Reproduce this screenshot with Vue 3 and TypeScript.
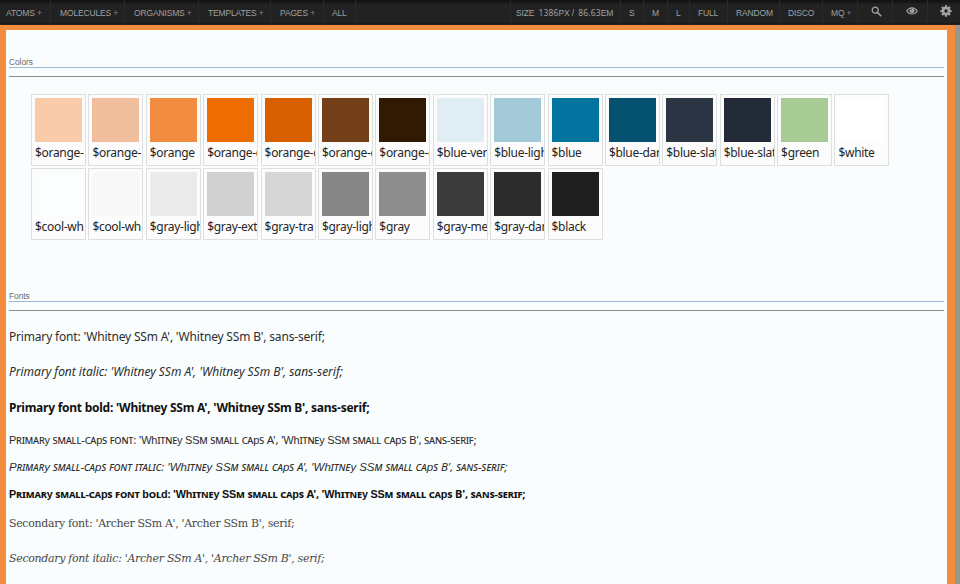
<script setup lang="ts">
interface Swatch { name: string; color: string }
interface Sample { text: string; kind: string; caps?: boolean }

const menus: string[] = ['Atoms', 'Molecules', 'Organisms', 'Templates', 'Pages']
const tools: string[] = ['S', 'M', 'L', 'Full', 'Random', 'Disco']

const swatches: Swatch[] = [
  { name: '$orange-', color: '#f9cbab' },
  { name: '$orange-', color: '#f0be9c' },
  { name: '$orange', color: '#f28c41' },
  { name: '$orange-dark', color: '#ef6c00' },
  { name: '$orange-darker', color: '#d96000' },
  { name: '$orange-deep', color: '#733f18' },
  { name: '$orange-extra-dark', color: '#301b02' },
  { name: '$blue-very-light', color: '#e0edf3' },
  { name: '$blue-light', color: '#a3c9d9' },
  { name: '$blue', color: '#03749f' },
  { name: '$blue-dark', color: '#04526f' },
  { name: '$blue-slate', color: '#2b3544' },
  { name: '$blue-slate-dark', color: '#222b37' },
  { name: '$green', color: '#a8cb96' },
  { name: '$white', color: '#ffffff' },
  { name: '$cool-wh', color: '#fbfefe' },
  { name: '$cool-wh', color: '#f8f8f8' },
  { name: '$gray-light', color: '#ebebeb' },
  { name: '$gray-extra-light', color: '#d1d1d1' },
  { name: '$gray-tra', color: '#d6d6d6' },
  { name: '$gray-light-medium', color: '#868686' },
  { name: '$gray', color: '#8e8e8e' },
  { name: '$gray-me', color: '#3b3b3b' },
  { name: '$gray-dark', color: '#2c2c2c' },
  { name: '$black', color: '#1e1e1e' },
]

const samples: Sample[] = [
  { text: "Primary font: 'Whitney SSm A', 'Whitney SSm B', sans-serif;", kind: 'regular' },
  { text: "Primary font italic: 'Whitney SSm A', 'Whitney SSm B', sans-serif;", kind: 'italic' },
  { text: "Primary font bold: 'Whitney SSm A', 'Whitney SSm B', sans-serif;", kind: 'bold' },
  { text: "Primary small-caps font: 'Whitney SSm small caps A', 'Whitney SSm small caps B', sans-serif;", kind: 'caps', caps: true },
  { text: "Primary small-caps font italic: 'Whitney SSm small caps A', 'Whitney SSm small caps B', sans-serif;", kind: 'caps-italic', caps: true },
  { text: "Primary small-caps font bold: 'Whitney SSm small caps A', 'Whitney SSm small caps B', sans-serif;", kind: 'caps-bold', caps: true },
  { text: "Secondary font: 'Archer SSm A', 'Archer SSm B', serif;", kind: 'serif' },
  { text: "Secondary font italic: 'Archer SSm A', 'Archer SSm B', serif;", kind: 'serif-italic' },
]

const runs = (text: string): string[] => text.split(/([PSWhypbd]+)/).filter(Boolean)
const isFallback = (run: string): boolean => /^[PSWhypbd]+$/.test(run)
</script>

<template>
  <div class="viewer">
    <header class="bar">
      <nav class="menus">
        <a v-for="m in menus" :key="m">{{ m }} <i>+</i></a>
        <a>All</a>
      </nav>
      <div class="tools">
        <span class="size">Size <b>1386</b>px / <b>86.63</b>em</span>
        <a v-for="t in tools" :key="t">{{ t }}</a>
        <a>MQ <i>+</i></a>
        <a class="icon">
          <svg width="11" height="11" viewBox="0 0 11 11"><circle cx="4.2" cy="4.2" r="3" fill="none" stroke="currentColor" stroke-width="1.3" /><path d="M6.5 6.5 9.8 9.8" stroke="currentColor" stroke-width="1.6" stroke-linecap="round" /></svg>
        </a>
        <a class="icon">
          <svg width="12" height="10" viewBox="0 0 12 10"><path d="M.7 5C3.2.6 8.8.6 11.3 5 8.8 9 3.2 9 .7 5Z" fill="none" stroke="currentColor" stroke-width="1.1" /><circle cx="6" cy="4.4" r="2.5" fill="currentColor" /><path d="M4.8 4.2A1.3 1.3 0 0 1 6 3" stroke="#222" stroke-width=".7" fill="none" /></svg>
        </a>
        <a class="icon">
          <svg width="12" height="12" viewBox="-6 -6 12 12" fill="currentColor"><g v-for="n in 4" :key="n" :transform="`rotate(${n * 45})`"><path d="M-1.3-3.5-1-5.7H1L1.3-3.5V3.5L1 5.7H-1L-1.3 3.5Z" /></g><circle r="4.2" /><circle r="1.7" fill="#222" /></svg>
        </a>
      </div>
    </header>
    <div class="stage">
      <main class="page">
        <section class="colors">
          <h2>Colors</h2>
          <div class="rule"></div>
          <ul class="swatches">
            <li v-for="s in swatches" :key="s.color">
              <div class="chip" :style="{ background: s.color }"></div>
              <span>{{ s.name }}</span>
            </li>
          </ul>
        </section>
        <section class="fonts">
          <h2>Fonts</h2>
          <div class="rule"></div>
          <div class="samples">
            <p v-for="s in samples" :key="s.kind" :class="s.kind"><span v-if="!s.caps">{{ s.text }}</span><span v-else><span v-for="(r, i) in runs(s.text)" :key="i" :class="isFallback(r) ? 'fallback' : 'small'">{{ r }}</span></span></p>
          </div>
        </section>
      </main>
    </div>
  </div>
</template>

<style>
body { margin: 0; overflow: hidden; }
</style>

<style scoped>
* { box-sizing: border-box; }
.viewer { width: 960px; height: 584px; display: flex; flex-direction: column; overflow: hidden; background: #999792; }
.bar { height: 25px; flex: none; display: flex; justify-content: space-between; background: linear-gradient(#121212 0, #151515 2px, #222 4px, #222 22px, #191919 24px, #37281c 25px); color: #a0a0a0; font: 8.5px/26px "Liberation Sans", Arial, sans-serif; letter-spacing: -.15px; text-transform: uppercase; }
.menus, .tools { display: grid; }
.menus { grid-template-columns: 51px 74px 74px 72px 53px 32px; }
.tools { grid-template-columns: 111px 23px 24px 22px 38px 52px 43px 35px 35px 35px 32px; }
.menus a, .tools a, .size { padding-left: 9px; border-right: 1px solid #292929; white-space: nowrap; }
.menus a:first-child { padding-left: 6px; }
.menus a:last-child, .tools a { padding-left: 8px; }
.size { padding-left: 5px; border-left: 1px solid #292929; }
.tools a:last-child { border-right: 0; }
.menus i, .tools i { font-style: normal; color: #858585; }
.size b { font: 8.5px "Noto Sans", sans-serif; letter-spacing: .15px; margin-left: 2px; }
.tools .icon { padding: 0 0 0 3px; height: 22px; display: flex; align-items: center; justify-content: center; }
.icon svg { display: block; }
.stage { flex: 1; width: 955px; background: #f48c3e; padding: 5px 8px 0 6px; min-height: 0; }
.page { height: 100%; background: #fafdfd; padding: 26px 3px 0; overflow: hidden; }
section { display: flex; flex-direction: column; }
.colors { height: 234px; }
h2 { margin: 0; height: 11px; font: 8.3px/12px "Liberation Sans", Arial, sans-serif; color: #666; }
.rule { height: 10px; flex: none; border-top: 1px solid #9dbbd3; border-bottom: 1px solid #8d8d8d; background: #fafdfd; }
.swatches { list-style: none; margin: 17px 0 0 22px; padding: 0; display: grid; grid-template-columns: repeat(15, 55px); column-gap: 2.4px; row-gap: 2.4px; }
.swatches li { height: 72px; border: 1px solid #dedfdf; background: #fcfcfc; padding: 3px 0 0 3px; overflow: hidden; font: 12px/22px "Noto Sans", sans-serif; letter-spacing: -.3px; color: #262626; white-space: nowrap; }
.chip { width: 47px; height: 44px; }
.samples { display: flex; flex-direction: column; padding-top: 17px; }
p { margin: 0; white-space: nowrap; color: #2d2d2d; height: 35px; font: 12px/18px "Noto Sans", sans-serif; letter-spacing: -.18px; }
.italic { font-style: italic; height: 36px; letter-spacing: -.02px; }
.bold { font-weight: 700; color: #111; height: 32px; letter-spacing: -.25px; }
.caps, .caps-italic { height: 27px; letter-spacing: -.24px; }
.caps-italic { font-style: italic; letter-spacing: -.03px; }
.caps-bold { font-weight: 700; color: #111; height: 30px; letter-spacing: -.18px; }
.small { font-variant-caps: small-caps; font-size: 11.5px; }
.fallback { font-family: "Liberation Sans", sans-serif; font-size: 11px; }
.caps-italic .fallback { font-size: 11.5px; }
.caps-bold .small { font-size: 11px; }
.caps-bold .fallback { font-size: 10.8px; }
.serif, .serif-italic { font: 11px/18px "DejaVu Serif", serif; letter-spacing: -.34px; color: #484848; }
.serif-italic { font-style: italic; letter-spacing: -.32px; }
</style>
